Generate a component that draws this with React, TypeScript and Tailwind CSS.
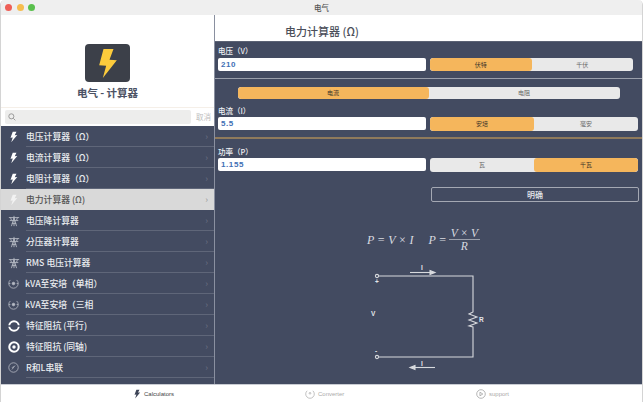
import React from "react";

const F = { fontFamily: '"Noto Sans CJK SC","Liberation Sans",sans-serif' };
const L = { fontFamily: '"Liberation Sans",sans-serif' };

function Bolt({ className, color = "#fff" }: { className?: string; color?: string }) {
  return (
    <svg viewBox="0 0 12 16" className={className}>
      <path d="M5 1 L10 1 L7.6 5.6 L11 5.4 L3 15 L5 8.6 L2 9 Z" fill={color} />
    </svg>
  );
}
function LogoBolt() {
  return (
    <svg viewBox="0 0 53 87" className="w-[18px] h-[29px]">
      <path d="M13 0H43L31 32L53 34L11 87L21 50L0 49Z" fill="#fccb3c" />
    </svg>
  );
}
function Tower() {
  return (
    <svg viewBox="0 0 14 14" className="w-[12px] h-[12px]" fill="none" stroke="#b8bcc6" strokeWidth="1">
      <path d="M1 3h12M2 6.5h10M7 1v12M4 13l3-10 3 10M3 3l1 3M11 3l-1 3M4.5 10h5" />
    </svg>
  );
}
function Dial() {
  return (
    <svg viewBox="0 0 14 14" className="w-[11px] h-[11px]" fill="none" stroke="#b8bcc6" strokeWidth="1">
      <path d="M3 2.5A6 6 0 1 0 11 2.5" />
      <circle cx="7" cy="7" r="1.6" fill="#b8bcc6" />
      <path d="M1 7h2M11 7h2" />
    </svg>
  );
}
function Parallel() {
  return (
    <svg viewBox="0 0 14 14" className="w-[12px] h-[12px]" fill="none" stroke="#fff" strokeWidth="2.2">
      <circle cx="7" cy="7" r="5.6" />
      <path d="M0 7h3.5M10.5 7h3.5" stroke="#434b61" strokeWidth="1.6" />
    </svg>
  );
}
function Coax() {
  return (
    <svg viewBox="0 0 14 14" className="w-[12px] h-[12px]" fill="none" stroke="#fff" strokeWidth="2.4">
      <circle cx="7" cy="7" r="5.5" />
      <circle cx="7" cy="7" r="2" fill="#fff" stroke="none" />
    </svg>
  );
}
function Rl() {
  return (
    <svg viewBox="0 0 14 14" className="w-[11px] h-[11px]" fill="none" stroke="#b8bcc6" strokeWidth="1">
      <circle cx="7" cy="7" r="6" />
      <path d="M5 9.5 9 4.5M5 7.5l2-2" />
    </svg>
  );
}

const rows: { t: string; icon: React.ReactNode; sel?: boolean; pad?: boolean }[] = [
  { t: "电压计算器（Ω）", icon: <Bolt className="w-[9px] h-[12px]" /> },
  { t: "电流计算器（Ω）", icon: <Bolt className="w-[9px] h-[12px]" /> },
  { t: "电阻计算器（Ω）", icon: <Bolt className="w-[9px] h-[12px]" /> },
  { t: "电力计算器 (Ω)", icon: <Bolt className="w-[9px] h-[12px]" color="#f2f2f2" />, sel: true },
  { t: "电压降计算器", icon: <Tower /> },
  { t: "分压器计算器", icon: <Tower /> },
  { t: "RMS 电压计算器", icon: <Tower /> },
  { t: "kVA至安培（单相）", icon: <Dial />, pad: true },
  { t: "kVA至安培（三相", icon: <Dial />, pad: true },
  { t: "特征阻抗 (平行)", icon: <Parallel /> },
  { t: "特征阻抗 (同轴)", icon: <Coax /> },
  { t: "R和L串联", icon: <Rl /> },
];

function Seg({ items, active, w, h = "h-[13px]" }: { items: [string, string]; active: number; w: string; h?: string }) {
  return (
    <div className={`flex shrink-0 ${w} ${h} rounded-[3px] bg-[#e9e9e9] overflow-hidden text-[6px] leading-none`}>
      {items.map((s, i) => (
        <div
          key={s}
          className={`flex-1 flex items-center justify-center ${i === active ? "bg-[#f5b65c] text-[#3a3328] rounded-[3px]" : "text-[#666]"}`}
        >
          {s}
        </div>
      ))}
    </div>
  );
}

function Field({ value }: { value: string }) {
  return (
    <div className="w-[208px] h-[13px] shrink-0 bg-white rounded-[2px] pl-[3px] flex items-center text-[8px] font-bold tracking-[0.6px] text-[#3f6fb5]" style={L}>
      {value}
    </div>
  );
}

function Label({ children }: { children: React.ReactNode }) {
  return <div className="text-[7.5px] leading-[9px] font-medium text-[#eef0f4]">{children}</div>;
}

function Circuit() {
  return (
    <svg viewBox="0 0 170 112" className="w-[170px] h-[112px]">
      <g transform="translate(0,-103)" fill="none" stroke="#d8dade" strokeWidth="1.1">
        <circle cx="37" cy="119" r="1.6" />
        <path d="M39 119H133V155l-4 2 8 3-8 3 8 3-8 3 4 1V200H39" />
        <circle cx="37" cy="200" r="1.6" />
        <path d="M70 115.5H90" />
        <path d="M90 113.5l5 2-5 2z" fill="#d8dade" />
        <path d="M75 210.5H95" />
        <path d="M75 208.5l-5 2 5 2z" fill="#d8dade" />
      </g>
      <g fill="#e4e6ea" fontSize="6.5" fontWeight="700" fontFamily="Liberation Sans, sans-serif">
        <text x="81" y="10">I</text>
        <text x="81" y="106">I</text>
        <text x="31" y="56">V</text>
        <text x="139" y="62">R</text>
        <text x="35" y="24">+</text>
        <text x="35" y="93">-</text>
      </g>
    </svg>
  );
}

export default function App() {
  return (
    <div className="w-[643px] h-[402px] bg-white flex flex-col overflow-hidden rounded-t-[5px] border-x border-[#d4d4d4]" style={F}>
      <div className="h-[15px] shrink-0 bg-[#efefef] flex items-center relative">
        <div className="flex gap-[4.5px] pl-[4px]">
          <span className="w-[7px] h-[7px] rounded-full bg-[#ee5f57]" />
          <span className="w-[7px] h-[7px] rounded-full bg-[#f6bd4f]" />
          <span className="w-[7px] h-[7px] rounded-full bg-[#5ac04d]" />
        </div>
        <div className="absolute inset-x-0 text-center text-[7.5px] leading-none text-[#555] font-medium">电气</div>
      </div>

      <div className="flex flex-1 min-h-0">
        <aside className="w-[214px] shrink-0 flex flex-col border-r border-[#8a90a0]">
          <div className="h-[92px] flex flex-col items-center pt-[29px]">
            <div className="w-[45px] h-[38px] rounded-[4px] bg-[#3c4049] flex items-center justify-center">
              <LogoBolt />
            </div>
            <div className="mt-[4px] text-[10.5px] leading-[14px] font-bold text-[#4c5264]">电气 - 计算器</div>
          </div>
          <div className="h-[19px] bg-white border-t border-[#f5efe8] flex items-center pl-[4px] gap-[5px]">
            <div className="w-[186px] h-[14px] rounded-[2px] bg-[#ededec] flex items-center pl-[3px]">
              <svg viewBox="0 0 12 12" className="w-[8px] h-[8px]" fill="none" stroke="#888" strokeWidth="1.2">
                <circle cx="5" cy="5" r="3.8" />
                <path d="M8 8l3 3" />
              </svg>
            </div>
            <span className="text-[7.5px] text-[#bdbdbd]">取消</span>
          </div>
          <div className="flex-1 bg-[#434b61] overflow-hidden">
            {rows.map((r) => (
              <div key={r.t} className={`h-[21px] relative flex items-center ${r.sel ? "bg-[#d9d9d9]" : ""}`}>
                <div className={`w-[25px] flex justify-center shrink-0 ${r.pad ? "-mr-[1px]" : ""}`}>{r.icon}</div>
                <span className={`text-[8.8px] font-medium whitespace-nowrap ${r.sel ? "text-[#555]" : "text-[#e9ebef]"}`}>{r.t}</span>
                <span className={`absolute right-[6px] text-[9px] ${r.sel ? "text-[#999]" : "text-[#6a7184]"}`}>›</span>
                <div className={`absolute bottom-0 left-[25px] right-0 h-px ${r.sel ? "bg-transparent" : "bg-[#5f6679]"}`} />
              </div>
            ))}
          </div>
        </aside>

        <main className="flex-1 flex flex-col min-w-0">
          <div className="h-[26px] flex items-center pl-[70px] pt-[6px] text-[11px] font-medium text-[#4b4f5a]">电力计算器 (Ω)</div>
          <div className="flex-1 bg-[#434b61] border-t border-[#5b6274] flex flex-col">
            <div className="h-[37px] border-b border-[#9a9fab] px-[3px] pt-[4px] shrink-0">
              <Label>电压（V）</Label>
              <div className="flex gap-[4px] mt-[3px]">
                <Field value="210" />
                <Seg items={["伏特", "千伏"]} active={0} w="w-[203px]" />
              </div>
            </div>
            <div className="flex justify-center pt-[8px] shrink-0">
              <Seg items={["电流", "电阻"]} active={0} w="w-[382px]" h="h-[12px]" />
            </div>
            <div className="px-[3px] pt-[7px] shrink-0 h-[40px] border-b-2 border-[#8f7a5c]">
              <Label>电流（I）</Label>
              <div className="flex gap-[4px] mt-[2px]">
                <Field value="5.5" />
                <Seg items={["安培", "毫安"]} active={0} w="w-[208px]" h="h-[14px]" />
              </div>
            </div>
            <div className="px-[3px] pt-[8px] shrink-0">
              <Label>功率（P）</Label>
              <div className="flex gap-[4px] mt-[2px]">
                <Field value="1.155" />
                <Seg items={["瓦", "千瓦"]} active={1} w="w-[208px]" h="h-[14px]" />
              </div>
              <div className="flex justify-end mt-[15px]">
                <button className="w-[208px] h-[15px] rounded-[2px] border border-[#a4a8b3] text-[8px] leading-none font-medium text-[#e6e8ec]">明确</button>
              </div>
            </div>
            <div className="flex items-center justify-center pr-[10px] mt-[25px] gap-[15px] text-[#d9dbe0] text-[12px] leading-none italic shrink-0" style={{ fontFamily: '"Liberation Serif",serif' }}>
              <span>P = V × I</span>
              <span className="flex items-center gap-[2px]">
                P =
                <span className="flex flex-col items-center text-[11.5px] leading-[12px]">
                  <span className="border-b border-[#9a9fab] px-[2px]">V × V</span>
                  <span>R</span>
                </span>
              </span>
            </div>
            <div className="flex justify-center mt-[8px] pr-[7px]">
              <Circuit />
            </div>
          </div>
        </main>
      </div>

      <div className="h-[18px] shrink-0 bg-white border-t border-[#c9ccd3] flex items-center pl-[132px] text-[6px] leading-none" style={L}>
        <div className="w-[172px] flex items-center gap-[3px] text-[#444]">
          <Bolt className="w-[8px] h-[10px]" color="#3d4457" />
          <span>Calculators</span>
        </div>
        <div className="w-[171px] flex items-center gap-[3px] text-[#aaa]">
          <svg viewBox="0 0 14 14" className="w-[10px] h-[10px]" fill="none" stroke="#aaa" strokeWidth="1">
            <path d="M3 2.5A6 6 0 1 0 11 2.5" />
            <circle cx="7" cy="6" r="1.2" />
          </svg>
          <span>Converter</span>
        </div>
        <div className="flex items-center gap-[3px] text-[#aaa]">
          <svg viewBox="0 0 14 14" className="w-[10px] h-[10px]" fill="none" stroke="#999" strokeWidth="1">
            <circle cx="7" cy="7" r="6" />
            <path d="M5.5 4.5l4 2.5-4 2.5z" />
          </svg>
          <span>support</span>
        </div>
      </div>
    </div>
  );
}
